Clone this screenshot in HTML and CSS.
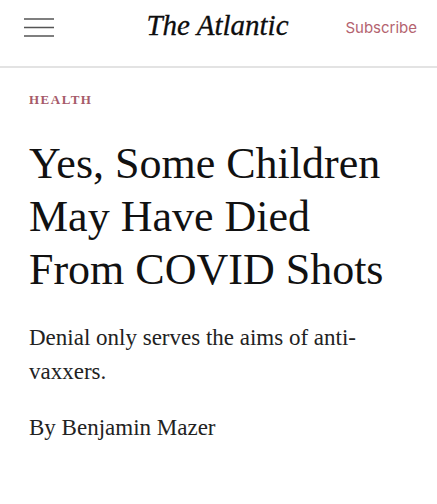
FILE: index.html
```html
<!DOCTYPE html>
<html lang="en">
<head>
    <meta charset="UTF-8">
    <meta name="viewport" content="width=device-width, initial-scale=1.0">
    <title>The Atlantic</title>
    <link rel="stylesheet" href="styles.css">
</head>
<body>
    <header class="topbar">
        <button class="menu" aria-label="Menu">
            <svg width="30" height="19" viewBox="0 0 30 19">
                <path d="M0 1H30M0 9.5H30M0 18H30" stroke="#555" stroke-width="1.6" fill="none"/>
            </svg>
        </button>
        <div class="logo">The Atlantic</div>
        <a class="subscribe" href="#">Subscribe</a>
    </header>

    <article class="story">
        <p class="section">HEALTH</p>
        <h1 class="headline">Yes, Some Children May Have Died From COVID Shots</h1>
        <p class="dek">Denial only serves the aims of anti-vaxxers.</p>
        <p class="byline">By Benjamin Mazer</p>
    </article>
</body>
</html>
```

FILE: styles.css
```css
body{
    margin: 0;
    background: #fff;
    color: #111;
    font-family: "Liberation Serif", "Times New Roman", serif;
}

.topbar{
    height: 68px;
    box-sizing: border-box;
    display: grid;
    grid-template-columns: 1fr auto 1fr;
    align-items: center;
    padding: 0 20px 12px 24px;
    border-bottom: 2px solid #e3e3e3;
}

.menu{
    justify-self: start;
    border: none;
    background: none;
    padding: 0;
    display: flex;
}

.logo{
    font-style: italic;
    font-size: 29px;
    line-height: 32px;
    color: #0d0d0d;
    margin: -4px 0 0 -6px;
    -webkit-text-stroke: 0.3px #0d0d0d;
}

.subscribe{
    justify-self: end;
    font-family: Inter, "Liberation Sans", sans-serif;
    font-size: 15px;
    color: #b4636f;
    text-decoration: none;
}

.story{
    padding: 24px 29px 0 29px;
}

.section{
    margin: 0;
    font-size: 13px;
    line-height: 16px;
    letter-spacing: 1.5px;
    font-weight: bold;
    color: #a65a69;
}

.headline{
    margin: 29px 0 0 0;
    font-weight: normal;
    font-size: 44px;
    line-height: 53px;
    color: #111;
}

.dek{
    margin: 25px 0 0 0;
    font-size: 23px;
    line-height: 34px;
    color: #222;
}

.byline{
    margin: 22px 0 0 0;
    font-size: 23px;
    line-height: 34px;
    color: #222;
}
```
